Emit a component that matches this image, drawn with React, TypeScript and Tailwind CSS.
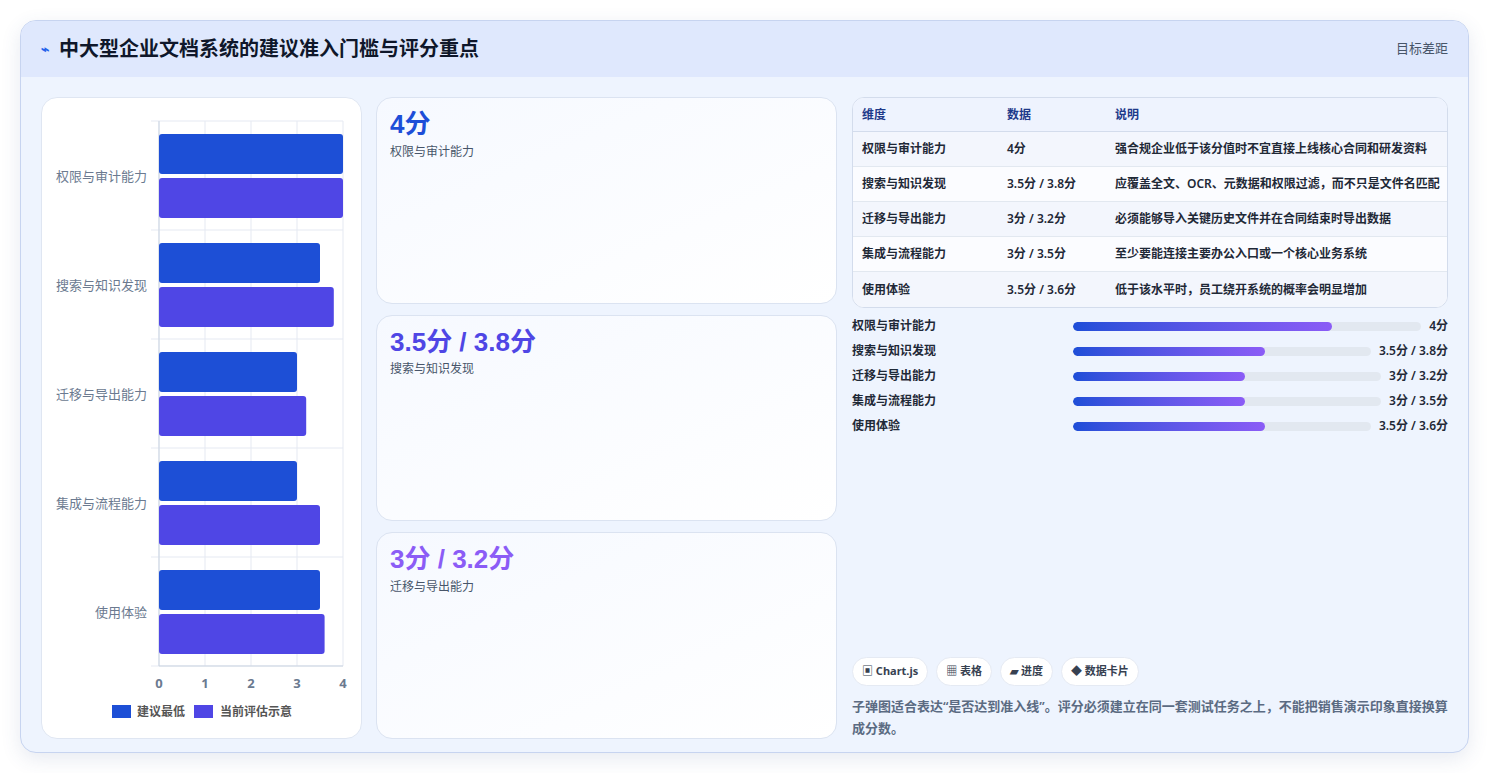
const rows = [
  { name: '权限与审计能力', min: 4, cur: 4, data: '4分', note: '强合规企业低于该分值时不宜直接上线核心合同和研发资料' },
  { name: '搜索与知识发现', min: 3.5, cur: 3.8, data: '3.5分 / 3.8分', note: '应覆盖全文、OCR、元数据和权限过滤，而不只是文件名匹配' },
  { name: '迁移与导出能力', min: 3, cur: 3.2, data: '3分 / 3.2分', note: '必须能够导入关键历史文件并在合同结束时导出数据' },
  { name: '集成与流程能力', min: 3, cur: 3.5, data: '3分 / 3.5分', note: '至少要能连接主要办公入口或一个核心业务系统' },
  { name: '使用体验', min: 3.5, cur: 3.6, data: '3.5分 / 3.6分', note: '低于该水平时，员工绕开系统的概率会明显增加' },
];

const Chart = () => {
  const x0 = 117;
  const unit = 46;
  const top = 23;
  const band = 109;
  return (
    <svg width="320" height="640" className="block">
      {[0, 1, 2, 3, 4].map((i) => (
        <line key={i} x1={x0 + i * unit} x2={x0 + i * unit} y1={top} y2={top + band * 5} stroke="#e5e9f2" />
      ))}
      {[0, 1, 2, 3, 4, 5].map((i) => (
        <line key={i} x1={x0 - 8} x2={x0 + 4 * unit} y1={top + i * band} y2={top + i * band} stroke="#e5e9f2" />
      ))}
      <line x1={x0} x2={x0} y1={top} y2={top + band * 5} stroke="#cbd5e1" />
      <line x1={x0} x2={x0 + 4 * unit} y1={top + band * 5} y2={top + band * 5} stroke="#cbd5e1" />
      {rows.map((r, i) => {
        const y = top + i * band;
        return (
          <g key={r.name}>
            <text x={x0 - 12} y={y + band / 2 + 5} textAnchor="end" fontSize="13" fill="#6b7a90">{r.name}</text>
            <rect x={x0} y={y + 13} width={r.min * unit} height={40} rx="3" fill="#1d4fd6" />
            <rect x={x0} y={y + 57} width={r.cur * unit} height={40} rx="3" fill="#4f46e5" />
          </g>
        );
      })}
      {[0, 1, 2, 3, 4].map((i) => (
        <text key={i} x={x0 + i * unit} y={590} textAnchor="middle" fontSize="13" fontWeight="700" fill="#6b7a90">{i}</text>
      ))}
      <rect x={70} y={607} width={19} height={13} fill="#1d4fd6" />
      <text x={95} y={618} fontSize="12" fontWeight="700" fill="#555">建议最低</text>
      <rect x={152} y={607} width={19} height={13} fill="#4f46e5" />
      <text x={178} y={618} fontSize="12" fontWeight="700" fill="#555">当前评估示意</text>
    </svg>
  );
};

const cards = [
  { v: '4分', l: '权限与审计能力', c: 'text-[#1d4ed8]' },
  { v: '3.5分 / 3.8分', l: '搜索与知识发现', c: 'text-[#4f46e5]' },
  { v: '3分 / 3.2分', l: '迁移与导出能力', c: 'text-[#8b5cf6]' },
];

const widths = ['74.5%', '64.6%', '55.8%', '55.8%', '64.6%'];

export default function App() {
  return (
    <div className="min-h-[773px] bg-white p-5" style={{ fontFamily: '"Noto Sans", "Noto Sans CJK SC", sans-serif' }}>
      <div className="h-[733px] rounded-2xl border border-[#c7d4f0] bg-[#eef4fe] shadow-[0_6px_20px_rgba(60,80,140,0.12)] overflow-hidden flex flex-col">
        <div className="h-[56px] shrink-0 bg-[#dfe8fd] flex items-center justify-between px-5">
          <div className="flex items-center gap-2.5">
            <span className="text-[#2563eb] text-sm font-bold">⌁</span>
            <span className="text-[20px] font-bold text-[#0f172a]">中大型企业文档系统的建议准入门槛与评分重点</span>
          </div>
          <span className="text-[13px] text-[#475569]">目标差距</span>
        </div>
        <div className="flex-1 flex gap-[14px] p-5 pb-[18px]">
          <div className="w-[321px] shrink-0 rounded-2xl bg-white border border-[#dfe6f2]">
            <Chart />
          </div>
          <div className="w-[461px] shrink-0 flex flex-col gap-[11px]">
            {cards.map((c) => (
              <div key={c.l} className="flex-1 rounded-2xl border border-[#dbe3f1] bg-gradient-to-br from-[#f6f9ff] to-white px-[13px] py-[10px]">
                <div className={`text-[26px] font-bold leading-tight ${c.c}`} style={{ fontFamily: '"Liberation Sans", "Noto Sans CJK SC", sans-serif' }}>{c.v}</div>
                <div className="text-[12px] text-[#475569] mt-0.5">{c.l}</div>
              </div>
            ))}
          </div>
          <div className="flex-1 flex flex-col ml-[1px]">
            <div className="rounded-xl border border-[#d3dcec] overflow-hidden bg-white">
              <div className="flex h-[34px] items-center bg-[#eef3fe] border-b border-[#d3dcec] text-[12px] font-bold text-[#1e3a8a]">
                <div className="w-[154px] pl-[9px]">维度</div>
                <div className="w-[108px]">数据</div>
                <div className="flex-1">说明</div>
              </div>
              {rows.map((r, i) => (
                <div key={r.name} className={`flex h-[35px] items-center text-[12px] font-semibold text-[#1f2937] ${i < 4 ? 'border-b border-[#e2e8f0]' : ''} ${i % 2 === 0 ? 'bg-[#f3f6fd]' : 'bg-[#fbfcff]'}`}>
                  <div className="w-[154px] pl-[9px]">{r.name}</div>
                  <div className="w-[108px]">{r.data}</div>
                  <div className="flex-1 whitespace-nowrap">{r.note}</div>
                </div>
              ))}
            </div>
            <div className="mt-[9px] flex flex-col gap-[7px]">
              {rows.map((r, i) => (
                <div key={r.name} className="flex items-center h-[18px] text-[12px] font-semibold text-[#1f2937]">
                  <div className="w-[221px] shrink-0">{r.name}</div>
                  <div className="flex-1 h-[9px] rounded-full bg-[#e2e8f0] overflow-hidden">
                    <div className="h-full rounded-full bg-gradient-to-r from-[#1d4ed8] to-[#8b5cf6]" style={{ width: widths[i] }} />
                  </div>
                  <div className="ml-2 whitespace-nowrap">{r.data}</div>
                </div>
              ))}
            </div>
            <div className="mt-auto">
              <div className="flex gap-2 text-[11px] font-bold text-[#374151]">
                {['▣ Chart.js', '▦ 表格', '▰ 进度', '◆ 数据卡片'].map((t) => (
                  <span key={t} className="rounded-full bg-white border border-[#e5eaf3] px-[9px] h-[29px] flex items-center">{t}</span>
                ))}
              </div>
              <p className="mt-[9px] text-[13px] leading-[22px] font-semibold text-[#5b6b82]">
                子弹图适合表达“是否达到准入线”。评分必须建立在同一套测试任务之上，不能把销售演示印象直接换算成分数。
              </p>
            </div>
          </div>
        </div>
      </div>
    </div>
  );
}
